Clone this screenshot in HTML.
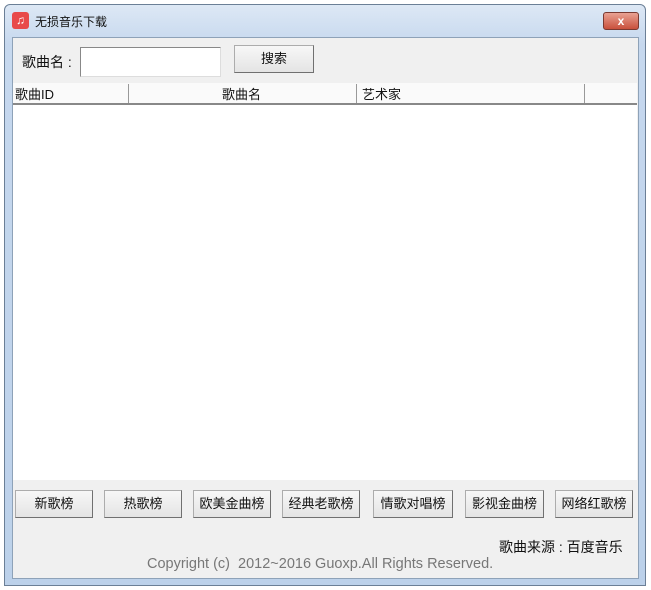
<!DOCTYPE html>
<html><head><meta charset="utf-8"><style>
*{margin:0;padding:0;box-sizing:border-box}
body{width:651px;height:590px;background:#fff;font-family:"Liberation Sans","Noto Sans CJK SC",sans-serif;font-size:13px;color:#111;position:relative;overflow:hidden}
.win{position:absolute;left:4px;top:4px;width:642px;height:582px;border:1px solid #6b7f96;border-radius:6px 6px 0 0;background:linear-gradient(#dde8f5,#c6d8ee 40px,#bcd1ea);}
.client{position:absolute;left:12px;top:37px;width:627px;height:542px;background:#f0f0f0;border:1px solid #8ea2b8}
.abs{position:absolute}
.btn{position:absolute;height:28px;background:linear-gradient(#f7f7f7,#e4e4e4);border:1px solid #acacac;border-right-color:#707070;border-bottom-color:#707070;text-align:center;line-height:26px;font-size:13px}
</style></head><body>
<div class="win"></div>
<div class="abs" style="left:12px;top:12px;width:17px;height:17px;background:#e84a4a;border-radius:3px;color:#fff;font-size:12px;text-align:center;line-height:17px">♫</div>
<div class="abs" style="left:35px;top:13px;font-size:12px">无损音乐下载</div>
<div class="abs" style="left:603px;top:12px;width:36px;height:18px;border:1px solid #7a3a32;border-radius:3px;background:linear-gradient(#e9a293,#c9503c);color:#fff;font-weight:bold;text-align:center;line-height:16px;font-size:12px">x</div>
<div class="client"></div>
<div class="abs" style="left:22px;top:52px;font-size:14px">歌曲名 :</div>
<div class="abs" style="left:80px;top:47px;width:141px;height:30px;background:#fff;border:1px solid #888;border-right-color:#ddd;border-bottom-color:#ddd"></div>
<div class="btn" style="left:234px;top:45px;width:80px">搜索</div>
<div class="abs" style="left:13px;top:83px;width:624px;height:22px;background:#fafafa;border-bottom:2px solid #888"></div>
<div class="abs" style="left:128px;top:84px;width:1px;height:19px;background:#999"></div>
<div class="abs" style="left:356px;top:84px;width:1px;height:19px;background:#999"></div>
<div class="abs" style="left:584px;top:84px;width:1px;height:19px;background:#999"></div>
<div class="abs" style="left:15px;top:84px">歌曲ID</div>
<div class="abs" style="left:222px;top:84px">歌曲名</div>
<div class="abs" style="left:362px;top:84px">艺术家</div>
<div class="abs" style="left:13px;top:105px;width:624px;height:375px;background:#fff"></div>
<div class="btn" style="left:15px;top:490px;width:78px">新歌榜</div>
<div class="btn" style="left:104px;top:490px;width:78px">热歌榜</div>
<div class="btn" style="left:193px;top:490px;width:78px">欧美金曲榜</div>
<div class="btn" style="left:282px;top:490px;width:78px">经典老歌榜</div>
<div class="btn" style="left:373px;top:490px;width:80px">情歌对唱榜</div>
<div class="btn" style="left:465px;top:490px;width:79px">影视金曲榜</div>
<div class="btn" style="left:555px;top:490px;width:78px">网络红歌榜</div>
<div class="abs" style="left:499px;top:537px;font-size:14px">歌曲来源 : 百度音乐</div>
<div class="abs" style="left:147px;top:556px;font-size:14.5px;color:#777">Copyright (c)&nbsp; 2012~2016 Guoxp.All Rights Reserved.</div>
</body></html>
